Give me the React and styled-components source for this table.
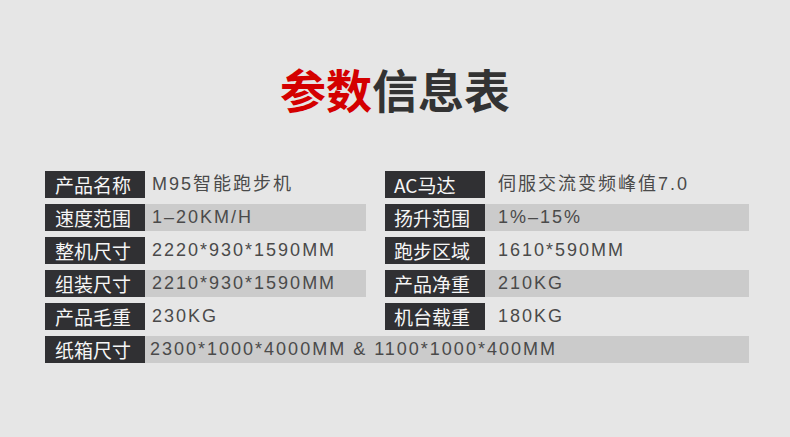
import React from "react";
import styled, { createGlobalStyle } from "styled-components";

const GlobalStyle = createGlobalStyle`
  html, body {
    margin: 0;
    padding: 0;
    background: #e6e6e6;
  }
`;

const Page = styled.div`
  width: 790px;
  height: 437px;
  background: #e6e6e6;
  font-family: "Noto Sans CJK SC", "Noto Sans", sans-serif;
  overflow: hidden;
`;

const Title = styled.h1`
  margin: 0;
  padding-top: 60px;
  text-align: center;
  font-size: 46px;
  font-weight: 700;
  line-height: 56px;
  color: #333333;
`;

const Accent = styled.span`
  color: #d40000;
`;

const Table = styled.div`
  display: grid;
  grid-template-columns: 321px 364px;
  column-gap: 19px;
  row-gap: 6px;
  margin: 55px 0 0 45px;
`;

const Row = styled.div`
  display: flex;
  height: 27px;
  grid-column: ${(p) => (p.$full ? "1 / -1" : "auto")};
`;

const Label = styled.div`
  flex: 0 0 100px;
  background: #303033;
  color: #f6f6f6;
  font-size: 19px;
  font-weight: 400;
  line-height: 27px;
  padding-left: ${(p) => p.$pad}px;
  box-sizing: border-box;
  white-space: nowrap;
`;

const Value = styled.div`
  flex: 1;
  background: ${(p) => (p.$shaded ? "#cbcbcb" : "transparent")};
  color: #4a4a4a;
  font-family: "Liberation Sans", "Noto Sans CJK SC", sans-serif;
  font-size: 18px;
  font-weight: 400;
  line-height: 27px;
  letter-spacing: 2px;
  padding-left: ${(p) => p.$pad}px;
  white-space: nowrap;
`;

const rows = [
  ["产品名称", "M95智能跑步机", "AC马达", "伺服交流变频峰值7.0", false],
  ["速度范围", "1–20KM/H", "扬升范围", "1%–15%", true],
  ["整机尺寸", "2220*930*1590MM", "跑步区域", "1610*590MM", false],
  ["组装尺寸", "2210*930*1590MM", "产品净重", "210KG", true],
  ["产品毛重", "230KG", "机台载重", "180KG", false],
];

export default function App() {
  return (
    <Page>
      <GlobalStyle />
      <Title>
        <Accent>参数</Accent>信息表
      </Title>
      <Table>
        {rows.map(([l1, v1, l2, v2, shaded]) => (
          <React.Fragment key={l1}>
            <Row>
              <Label $pad={10}>{l1}</Label>
              <Value $shaded={shaded} $pad={7}>{v1}</Value>
            </Row>
            <Row>
              <Label $pad={9}>{l2}</Label>
              <Value $shaded={shaded} $pad={13}>{v2}</Value>
            </Row>
          </React.Fragment>
        ))}
        <Row $full>
          <Label $pad={10}>纸箱尺寸</Label>
          <Value $shaded $pad={5}>2300*1000*4000MM &amp; 1100*1000*400MM</Value>
        </Row>
      </Table>
    </Page>
  );
}
